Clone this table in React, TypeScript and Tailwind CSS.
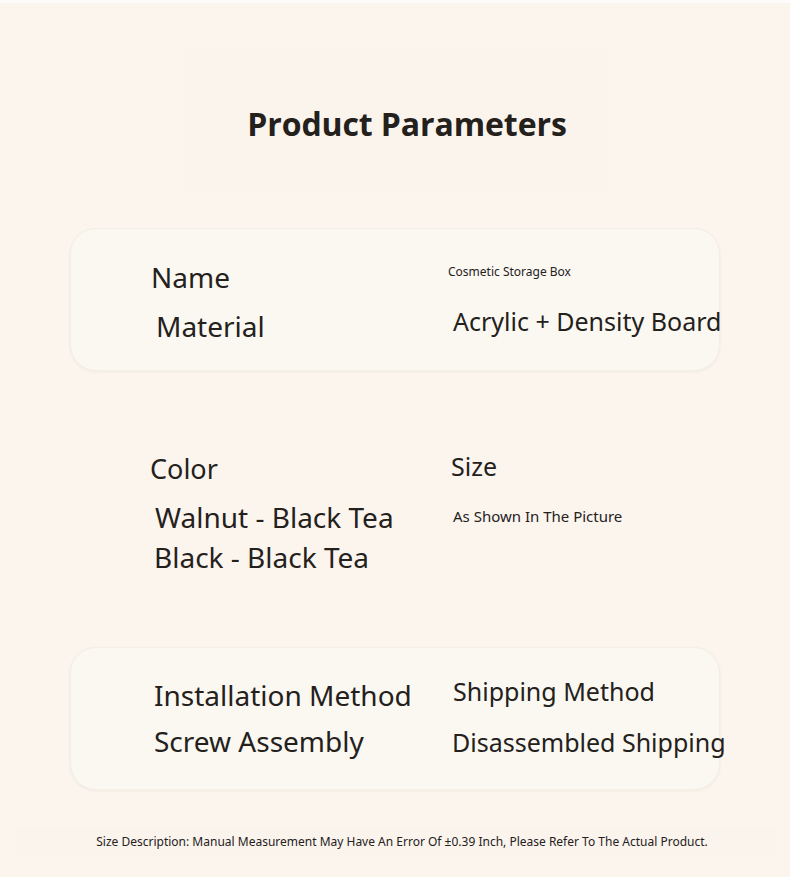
export default function App() {
  return (
    <div className="relative w-[790px] h-[877px] overflow-hidden bg-[#fcf5ee] text-[#24211d] font-['Noto_Sans',sans-serif]">
      <div className="h-[3px] bg-[#fdfcfb]" />

      {/* title */}
      <div className="flex justify-center pt-[45px]">
        <div className="w-[424px] h-[144px] flex items-center justify-center bg-[#fbf4ec] pl-[24px] pt-[8px]">
          <h1 className="font-['Open_Sans',sans-serif] font-bold text-[32px] tracking-[-0.1px]">Product Parameters</h1>
        </div>
      </div>

      {/* card 1 */}
      <div className="mx-[70px] mt-[36px] h-[143px] rounded-[26px] bg-[#fbf8f1] border border-[#f3efe6] shadow-[0_1px_3px_rgba(120,100,70,0.08)] grid grid-cols-[378px_1fr]">
        <div className="pl-[80px] pt-[30px] flex flex-col">
          <span className="text-[28px] leading-[36px]">Name</span>
          <span className="text-[28px] leading-[36px] mt-[13px] pl-[5px]">Material</span>
        </div>
        <div className="pt-[35px] flex flex-col whitespace-nowrap">
          <span className="text-[12px] leading-[16px] -ml-[1px]">Cosmetic Storage Box</span>
          <span className="text-[25px] leading-[34px] mt-[24px] pl-[4px]">Acrylic + Density Board</span>
        </div>
      </div>

      {/* section 2 */}
      <div className="mx-[70px] mt-[62px] h-[150px] grid grid-cols-[378px_1fr]">
        <div className="pl-[80px] pt-[18px] flex flex-col">
          <span className="text-[27px] leading-[36px]">Color</span>
          <span className="text-[28px] leading-[40px] mt-[10px] pl-[5px]">Walnut - Black Tea</span>
          <span className="text-[28px] leading-[40px] pl-[4px]">Black - Black Tea</span>
        </div>
        <div className="pt-[15px] flex flex-col whitespace-nowrap">
          <span className="text-[25px] leading-[36px] pl-[3px]">Size</span>
          <span className="text-[15px] leading-[20px] mt-[22px] pl-[5px]">As Shown In The Picture</span>
        </div>
      </div>

      {/* card 3 */}
      <div className="mx-[70px] mt-[64px] h-[143px] rounded-[26px] bg-[#fbf8f1] border border-[#f3efe6] shadow-[0_1px_3px_rgba(120,100,70,0.08)] grid grid-cols-[378px_1fr]">
        <div className="pl-[83px] pt-[29px] flex flex-col whitespace-nowrap">
          <span className="text-[28px] leading-[36px]">Installation Method</span>
          <span className="text-[28px] leading-[36px] mt-[10px]">Screw Assembly</span>
        </div>
        <div className="pt-[25px] flex flex-col whitespace-nowrap">
          <span className="text-[25px] leading-[36px] pl-[4px]">Shipping Method</span>
          <span className="text-[25px] leading-[36px] mt-[15px] pl-[3px]">Disassembled Shipping</span>
        </div>
      </div>

      {/* footer */}
      <div className="mx-[15px] mt-[37px] h-[30px] bg-[#fbf4ec] flex items-center justify-center pl-[14px]">
        <p className="text-[12px] leading-[16px]">Size Description: Manual Measurement May Have An Error Of ±0.39 Inch, Please Refer To The Actual Product.</p>
      </div>
    </div>
  );
}
